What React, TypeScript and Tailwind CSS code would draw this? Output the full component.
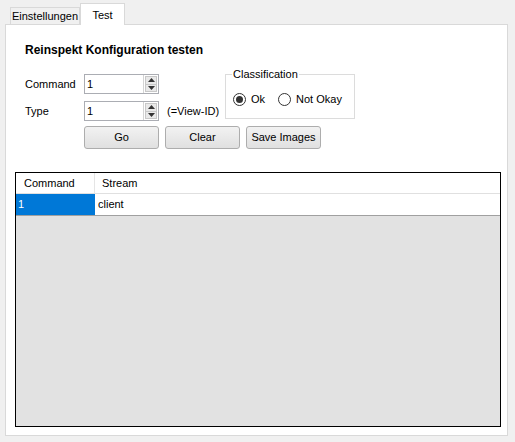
import React from 'react'

const font = { fontFamily: '"Liberation Sans", Arial, sans-serif' }

function SpinBox({ value }: { value: string }) {
  return (
    <div className="flex h-[20px] w-[75px] items-stretch border border-[#abadb3] bg-white">
      <div className="flex-1 pl-[2px] text-[11px] leading-[18px] text-black">{value}</div>
      <div className="flex w-[15px] flex-col border-l border-[#d4d4d4] p-[1px]">
        <div className="flex flex-1 items-center justify-center border border-[#c8c8c8] bg-[#e9e9e9]">
          <svg width="7" height="4" viewBox="0 0 7 4"><path d="M0 4 L3.5 0 L7 4 Z" fill="#333" /></svg>
        </div>
        <div className="flex flex-1 items-center justify-center border border-t-0 border-[#c8c8c8] bg-[#e9e9e9]">
          <svg width="7" height="4" viewBox="0 0 7 4"><path d="M0 0 L3.5 4 L7 0 Z" fill="#333" /></svg>
        </div>
      </div>
    </div>
  )
}

function Radio({ label, checked }: { label: string; checked?: boolean }) {
  return (
    <div className="flex items-center gap-[5px]">
      <div className="flex h-[13px] w-[13px] items-center justify-center rounded-full border border-[#333] bg-white">
        {checked && <div className="h-[7px] w-[7px] rounded-full bg-[#333]" />}
      </div>
      <span className="text-[11px] text-black">{label}</span>
    </div>
  )
}

function Button({ label }: { label: string }) {
  return (
    <button className="h-[23px] w-[75px] rounded-[3px] border border-[#adadad] bg-gradient-to-b from-[#f2f2f2] to-[#e0e0e0] text-[11px] text-black">
      {label}
    </button>
  )
}

export default function App() {
  return (
    <div className="h-[442px] w-[515px] overflow-hidden bg-[#f0f0f0] pl-[5px] pt-[3px]" style={font}>
      {/* Tabs */}
      <div className="flex h-[21px] items-end pl-[5px]">
        <div className="flex h-[17px] w-[70px] items-center justify-center border border-b-0 border-[#d9d9d9] bg-[#f0f0f0] text-[11px] text-black">
          Einstellungen
        </div>
        <div className="relative z-10 -mb-px flex h-[22px] w-[45px] items-start justify-center border border-b-0 border-[#d9d9d9] bg-white pt-[3px] text-[11px] text-black">
          Test
        </div>
      </div>

      {/* Panel */}
      <div className="h-[412px] w-[503px] border border-[#d9d9d9] bg-white px-[9px] pt-[18px]">
        <div className="pl-[10px] text-[12px] font-bold leading-[14px] text-black">Reinspekt Konfiguration testen</div>

        <div className="mt-[10px] flex pl-[10px]">
          <div className="flex w-[200px] flex-col gap-[7px] pt-[7px]">
            <div className="flex items-center">
              <span className="w-[59px] text-[11px] text-black">Command</span>
              <SpinBox value="1" />
            </div>
            <div className="flex items-center">
              <span className="w-[59px] text-[11px] text-black">Type</span>
              <SpinBox value="1" />
              <span className="ml-[8px] text-[11px] text-black">(=View-ID)</span>
            </div>
          </div>
          <fieldset className="h-[52px] w-[130px] border border-[#dcdcdc] px-[7px]">
            <legend className="-ml-[1px] px-[1px] text-[11px] leading-[14px] text-black">Classification</legend>
            <div className="mt-[10px] flex gap-[13px]">
              <Radio label="Ok" checked />
              <Radio label="Not Okay" />
            </div>
          </fieldset>
        </div>

        <div className="mt-[5px] flex gap-[6px] pl-[69px]">
          <Button label="Go" />
          <Button label="Clear" />
          <Button label="Save Images" />
        </div>

        {/* Grid */}
        <div className="mt-[23px] flex h-[255px] w-[486px] flex-col border border-black bg-[#e2e2e2]">
          <div className="flex h-[21px] border-b border-[#e0e0e0] bg-white text-[11px] text-black">
            <div className="flex w-[79px] items-center border-r border-[#e5e5e5] pl-[8px]">Command</div>
            <div className="flex flex-1 items-center pl-[7px]">Stream</div>
          </div>
          <div className="flex h-[22px] border-b border-[#a0a0a0] text-[11px]">
            <div className="flex w-[79px] items-center bg-[#0078d7] pl-[2px] text-white">1</div>
            <div className="flex flex-1 items-center bg-white pl-[3px] text-black">client</div>
          </div>
        </div>
      </div>
    </div>
  )
}
